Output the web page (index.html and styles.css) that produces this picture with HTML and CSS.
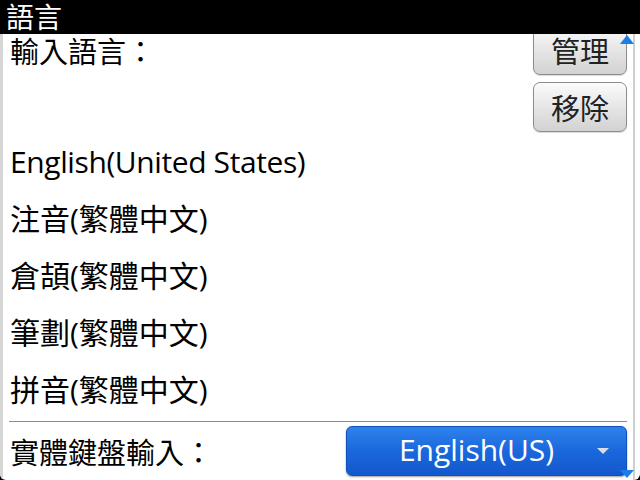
FILE: index.html
```html
<!DOCTYPE html>
<html lang="zh-Hant">
<head>
    <meta charset="UTF-8">
    <title>語言</title>
    <link rel="stylesheet" href="styles.css">
</head>
<body>
    <div class="screen">
        <div class="titlebar">語言</div>
        <div class="viewport">
            <div class="content">
                <!-- input languages -->
                <div class="row row-top">
                    <span class="label">輸入語言：</span>
                    <button class="btn btn-top">管理</button>
                </div>
                <div class="row row-right">
                    <button class="btn">移除</button>
                </div>
                <ul class="lang-list">
                    <li class="latin">English(United States)</li>
                    <li>注音(繁體中文)</li>
                    <li>倉頡(繁體中文)</li>
                    <li>筆劃(繁體中文)</li>
                    <li>拼音(繁體中文)</li>
                </ul>
                <div class="separator"></div>
                <!-- physical keyboard -->
                <div class="row row-bottom">
                    <span class="label">實體鍵盤輸入：</span>
                    <div class="dropdown">
                        <span class="dropdown-text">English(US)</span>
                        <span class="dropdown-arrow"></span>
                    </div>
                </div>
            </div>
            <div class="scroll-track"></div>
            <div class="scroll-up"></div>
            <div class="scroll-down"></div>
        </div>
    </div>
</body>
</html>
```

FILE: styles.css
```css
body {
    margin: 0;
    background-color: black;
    font-family: "Open Sans", "Noto Sans CJK TC", sans-serif;
}
.screen {
    width: 640px;
    height: 480px;
    overflow: hidden;
    display: flex;
    flex-direction: column;
    background-color: white;
    border-radius: 0 0 6px 6px;
}
.titlebar {
    position: relative;
    z-index: 2;
    flex-shrink: 0;
    height: 34px;
    line-height: 34px;
    padding-left: 6px;
    background-color: black;
    color: white;
    font-size: 28px;
}
.viewport {
    position: relative;
    flex: 1;
    overflow: hidden;
    border-left: 3px solid #d6d6d6;
}
.content {
    padding-left: 7px;
    padding-right: 13px;
}
.row {
    display: flex;
    align-items: center;
    justify-content: space-between;
    height: 50px;
}
.row-top {
    height: 41px;
    align-items: flex-start;
}
.row-top .label {
    margin-top: 3px;
}
.btn-top {
    margin-top: -9px;
}
.row-right {
    justify-content: flex-end;
    margin-top: 7px;
}
.label {
    font-size: 29px;
    line-height: 1;
    color: black;
}
.btn {
    width: 94px;
    height: 50px;
    padding: 0;
    border: 1px solid #8c8c8c;
    border-radius: 7px;
    background: linear-gradient(#fbfbfb, #e6e6e6 50%, #d2d2d2);
    color: #222;
    font-family: "Noto Sans CJK TC", sans-serif;
    font-size: 29px;
    box-shadow: 0 1px 1px rgba(0,0,0,0.15);
}
.lang-list {
    list-style: none;
    margin: 1px 0 0 0;
    padding: 0;
}
.lang-list li {
    height: 57px;
    line-height: 57px;
    font-size: 30px;
    color: black;
}
.lang-list .latin {
    letter-spacing: -0.4px;
}
.separator {
    height: 1px;
    margin: 3px 0 0 -1px;
    background-color: #8a8a8a;
}
.row-bottom {
    margin-top: 4px;
}
.row-bottom .label {
    padding-top: 2px;
}
.dropdown {
    position: relative;
    box-sizing: border-box;
    width: 281px;
    height: 50px;
    padding: 0 20px 4px 0;
    border: 1px solid #1050b8;
    border-radius: 6px;
    background: linear-gradient(#2f82ec, #1a68dc 50%, #1258cc);
    display: flex;
    align-items: center;
    justify-content: center;
    box-shadow: 0 1px 2px rgba(0,0,0,0.4);
}
.dropdown-text {
    color: white;
    font-size: 30px;
}
.dropdown-arrow {
    position: absolute;
    right: 17px;
    top: 21px;
    border-left: 6px solid transparent;
    border-right: 6px solid transparent;
    border-top: 6px solid #d8dde8;
}
.scroll-track {
    position: absolute;
    top: 0;
    bottom: 0;
    left: 630px;
    width: 2px;
    background-color: #cfcfcf;
}
.scroll-up {
    position: absolute;
    top: 1px;
    left: 617px;
    border-left: 7px solid transparent;
    border-right: 7px solid transparent;
    border-bottom: 9px solid #1a7ee8;
}
.scroll-down {
    position: absolute;
    bottom: 2px;
    left: 617px;
    border-left: 7px solid transparent;
    border-right: 7px solid transparent;
    border-top: 8px solid #1a7ee8;
}
```
